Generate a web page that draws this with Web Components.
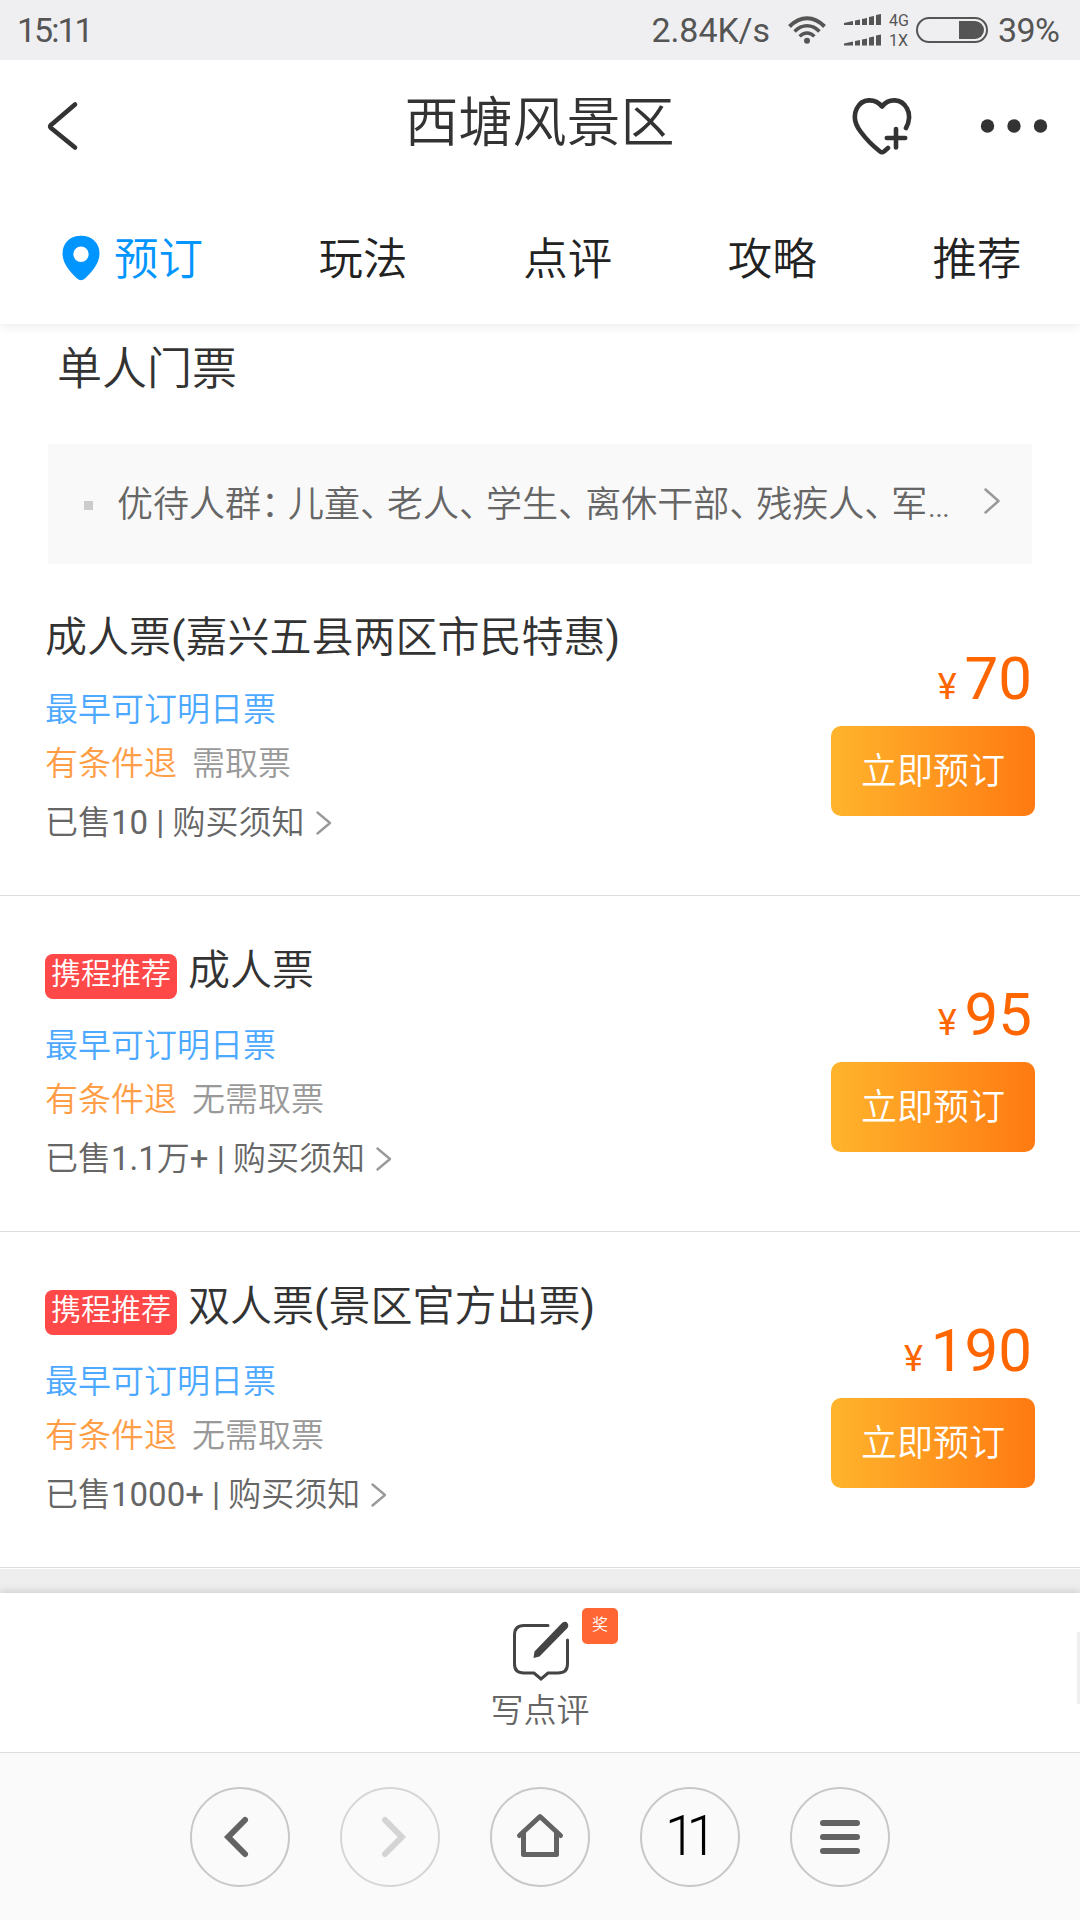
<!DOCTYPE html>
<html lang="zh-CN">
<head>
<meta charset="utf-8">
<title>西塘风景区</title>
<style>
body{margin:0;background:#fff;font-family:Roboto,"Noto Sans CJK SC",sans-serif;font-weight:350;color:#333}
</style>
</head>
<body>
<scenic-page>
  <status-bar time="15:11" speed="2.84K/s" battery="39%"></status-bar>
  <page-header>西塘风景区</page-header>
  <tab-bar><span slot="active">预订</span><span>玩法</span><span>点评</span><span>攻略</span><span>推荐</span></tab-bar>
  <ticket-group>单人门票</ticket-group>
  <ticket-item name="成人票(嘉兴五县两区市民特惠)" pickup="需取票" sold="已售10" price="70"></ticket-item>
  <ticket-item badge="携程推荐" name="成人票" pickup="无需取票" sold="已售1.1万+" price="95"></ticket-item>
  <ticket-item badge="携程推荐" name="双人票(景区官方出票)" pickup="无需取票" sold="已售1000+" price="190"></ticket-item>
  <review-bar>写点评</review-bar>
  <browser-bar tabs="11"></browser-bar>
</scenic-page>
<script>
// Latin runs in ticket texts are set one step heavier than the Chinese glyphs around them.
const latin = s => s.replace(/[\x21-\x7e]+/g, '<b>$&</b>');
const define = (name, html) => customElements.define(name, class extends HTMLElement {
  connectedCallback() {
    if (this.shadowRoot) return;
    this.attachShadow({mode: 'open'}).innerHTML =
      '<style>:host,*{box-sizing:border-box}svg{display:block;flex:none}</style>' +
      html.replace(/\{(\w+)\}/g, (m, k) => {
        const v = this.getAttribute(k) || '';
        return k === 'name' || k === 'sold' ? latin(v) : v;
      });
  }
});

define('scenic-page', `<style>:host{display:flex;flex-direction:column;width:1080px;height:1920px;overflow:hidden;background:#fff}</style><slot></slot>`);

define('status-bar', `<style>
:host{display:flex;align-items:center;height:60px;flex:none;background:#efeff1;color:#555;font-size:34px;line-height:60px;font-weight:400;padding:0 17px 0 17px}
.time{flex:1;letter-spacing:-2px}
.speed{letter-spacing:-.1px;margin-right:18px}
.pct{letter-spacing:-.6px;width:65px;margin-left:10px;white-space:nowrap}
.sim{display:flex;flex-direction:column;gap:4px;font-size:16px;line-height:16px;width:22px;margin:2px 5px 0 8px}
</style>
<span class="time">{time}</span><span class="speed">{speed}</span>
<svg width="38" height="28" viewBox="0 0 38 28" fill="none" stroke="#555" stroke-width="4"><path d="M1.5 10.5Q9.5 2.2 19 2.2T36.5 10.5"/><path d="M6.6 15.5Q12 9.8 19 9.8T31.4 15.5" stroke-width="3.6"/><path d="M11.600 20.400Q15 17 19 17T26.400 20.400" stroke-width="3.400"/><circle cx="19" cy="24.800" r="3" fill="#555" stroke="none"/></svg>
<svg width="37" height="32" viewBox="0 0 37 32" fill="#555" style="margin-left:18px"><path d="M0 9l9-2v4H0zM11 6.500l5-1V11h-5zM18 5l5-1V11h-5zM25 3l5-1v9h-5zM32 1l5-1v11h-5z"/><path transform="translate(0 20.500)" d="M0 9l9-2v4H0zM11 6.500l5-1V11h-5zM18 5l5-1V11h-5zM25 3l5-1v9h-5zM32 1l5-1v11h-5z"/></svg>
<span class="sim"><span>4G</span><span>1X</span></span>
<svg width="72" height="26" viewBox="0 0 72 26"><rect x="1" y="1" width="70" height="24" rx="12" fill="none" stroke="#555" stroke-width="2"/><path d="M43 4H59a9 9 0 0 1 0 18H43z" fill="#555"/></svg>
<span class="pct">{battery}</span>`);

define('page-header', `<style>
:host{display:flex;align-items:center;height:131px;flex:none;padding:0 32px 0 46px}
h1{flex:1;margin:0 -26px 4px -4px;font-size:54px;line-height:70px;font-weight:350;text-align:center;padding-left:127px}
.heart{margin-right:66px}
</style>
<svg width="34" height="52" viewBox="0 0 34 52" fill="none" stroke="#333" stroke-width="4.600" stroke-linecap="round" stroke-linejoin="round"><path d="M29 4.500L5 25Q3.500 26.500 5 28L29 47.500"/></svg>
<h1><slot></slot></h1>
<svg class="heart" width="64" height="60" viewBox="0 0 64 60" fill="none" stroke="#333" stroke-width="4.600" stroke-linecap="round" stroke-linejoin="round"><path d="M56 32C59.500 26 60.200 18 57 12.500C51.500 2 38.500 2 32 10.500C25 2 12 2 6.800 12.500C3 20 5 28 10.500 35.500C16 43 23 50 30 55.500Q32 57 34 55.500L38 52"/><path d="M36.800 42H55.200M46 33V51.500"/></svg>
<svg width="68" height="16" viewBox="0 0 68 16" fill="#333"><circle cx="7.500" cy="8" r="6.700"/><circle cx="34" cy="8" r="6.700"/><circle cx="60.500" cy="8" r="6.700"/></svg>`);

define('tab-bar', `<style>
:host{display:flex;align-items:center;height:133px;flex:none;padding:0 0 0 62px;font-size:44.500px;line-height:60px;color:#222;position:relative;z-index:1;background:#fff;box-shadow:0 3px 9px rgba(0,0,0,.07);clip-path:inset(0 0 -20px)}
.list{display:flex;gap:115.600px;margin:4px 0 0 14px}
.on{color:#0095ff}
svg{margin-top:1px}
</style>
<svg width="38" height="46" viewBox="0 0 38 46"><path fill="#0095ff" fill-rule="evenodd" d="M19 .7C30 .7 37.500 8 37.500 18.500C37.500 29 29 38 23 43.500Q19 47 15 43.500C9 38 .5 29 .5 18.500C.5 8 8 .7 19 .7ZM19 11.500a7.700 7.700 0 1 0 0 15.400a7.700 7.700 0 1 0 0-15.400Z"/></svg>
<div class="list"><span class="on"><slot name="active"></slot></span><slot></slot></div>`);

define('ticket-group', `<style>
:host{display:flex;flex-direction:column;height:236px;flex:none;padding:16px 48px 0}
h2{margin:0 0 0 9px;font-size:45px;line-height:60px;height:60px;flex:none;font-weight:350}
.note{display:flex;flex:none;align-items:center;height:120px;margin-top:44px;background:#f9f9f9;color:#666;font-size:36px;line-height:50px;padding:0 32px 0 36px;white-space:nowrap}
.note i{width:9px;height:9px;background:#ccc;margin:3px 24px 0 0}
.note p{flex:1;margin:1px 0 0}
b{font-weight:350;letter-spacing:-9px}
svg{margin-top:-6px}
</style>
<h2><slot></slot></h2>
<div class="note"><i></i><p>优待人群<b>：</b>儿童<b>、</b>老人<b>、</b>学生<b>、</b>离休干部<b>、</b>残疾人<b>、</b>军…</p>
<svg width="16" height="26" viewBox="0 0 16 26" fill="none" stroke="#999" stroke-width="2.500" stroke-linecap="round" stroke-linejoin="round"><path d="M1.500 1.500L14.500 13L1.500 24.500"/></svg></div>`);

define('ticket-item', `<style>
:host{display:flex;justify-content:space-between;height:336px;flex:none;border-bottom:1px solid #ddd;padding:51px 45px 0 45px}
b{font-weight:400}
.info{font-size:33px;line-height:44px}
.head{display:flex;height:56px;margin-bottom:21px}
.name{font-size:42px;line-height:56px;white-space:nowrap;margin-top:-1px}
.tag{display:none;margin:7px 11px 0 0;width:132px;height:45px;border-radius:8px;background:#ff4848;color:#fff;font-size:30px;line-height:40px;text-align:center}
:host([badge]) .tag{display:block}
:host([badge]) .name{margin-top:-4px}
.early{color:#4ca9ff}
.rule{display:flex;gap:15px;color:#999;margin:10px 0 15px}
.rule span:first-child{color:#ff9e46}
.sold{display:flex;align-items:center;color:#666;white-space:nowrap}
.buy{display:flex;flex-direction:column;align-items:flex-end;padding-top:38px}
.price{color:#f60;font-size:60px;line-height:60px;height:60px;font-weight:400;margin:0 3px 17px 0;display:flex;align-items:baseline;gap:8px}
.price small{font-size:36px}
button{width:204px;height:90px;border:0;border-radius:10px;padding:1px 0 0;background:linear-gradient(90deg,#ffb42c,#ff7a12);color:#fff;font:inherit;font-size:36px;line-height:50px}
</style>
<div class="info"><div class="head"><span class="tag">{badge}</span><span class="name">{name}</span></div>
<div class="early">最早可订明日票</div>
<div class="rule"><span>有条件退</span><span>{pickup}</span></div>
<div class="sold"><span>{sold}<b> | </b>购买须知</span><svg style="margin:0 0 0 11px" width="16" height="24" viewBox="0 0 16 24" fill="none" stroke="#999" stroke-width="2.300" stroke-linecap="round" stroke-linejoin="round"><path d="M1.500 1.500L14 12L1.500 22.500"/></svg></div></div>
<div class="buy"><div class="price"><small>¥</small><span>{price}</span></div><button>立即预订</button></div>`);

define('review-bar', `<style>
:host{display:block;flex:none;height:185px;padding-top:24px;background:#eee;border-top:1px solid #fff;overflow:hidden}
.panel{display:flex;flex-direction:column;align-items:center;height:160px;background:#fff;border-bottom:1px solid #ddd;box-shadow:0 -1px 9px rgba(0,0,0,.16);position:relative;padding-top:28px;color:#666;font-size:33px;line-height:44px}
.reward{position:absolute;left:582px;top:15px;width:36px;height:36px;border-radius:5px;background:#f63;color:#fff;font-size:16px;line-height:34px;text-align:center}
.handle{position:absolute;right:0;top:39px;width:3px;height:72px;background:#eee}
span{margin-top:8px}
</style>
<div class="panel">
<svg width="58" height="60" viewBox="0 0 58 60" style="margin-left:2px"><path fill="none" stroke="#444" stroke-width="3" stroke-linecap="round" d="M36 4.500H12Q2.500 4.500 2.500 14V43Q2.500 52 12 52H22L29 58L36 52H46Q55.500 52 55.500 43V19"/><path fill="#444" d="M49.500 2.500Q51.500 0 54.500 1Q57.500 4 55.500 7L27.500 35.500L21.500 37L22.500 30.500Z"/></svg>
<span><slot></slot></span><div class="reward">奖</div><div class="handle"></div></div>`);

define('browser-bar', `<style>
:host{display:flex;justify-content:center;gap:50px;flex:1;background:#fafafa;padding-top:34px}
.c{width:100px;height:100px;flex:none;border:2px solid #c8c8c8;border-radius:50%;display:flex;align-items:center;justify-content:center;color:#000;font-size:55px;line-height:60px;letter-spacing:-9px;font-weight:350}
.c.off{border-color:#d6d6d6}
.c span{margin:-3px 0 0 -7px}
</style>
<div class="c"><svg width="100" height="100" viewBox="0 0 100 100" fill="none" stroke="#636363" stroke-width="6" stroke-linecap="round"><path d="M55 33L38.200 50L55 67"/></svg></div>
<div class="c off"><svg width="100" height="100" viewBox="0 0 100 100" fill="none" stroke="#d4d4d4" stroke-width="6" stroke-linecap="round"><path d="M45 33L61.800 50L45 67"/></svg></div>
<div class="c"><svg width="100" height="100" viewBox="0 0 100 100" fill="none" stroke="#636363" stroke-width="5" stroke-linecap="round" stroke-linejoin="round"><path d="M29.500 48.500L50 29.500L70.500 48.500"/><path d="M33.500 46V67.500H66.500V46"/></svg></div>
<div class="c"><span>{tabs}</span></div>
<div class="c"><svg width="100" height="100" viewBox="0 0 100 100" stroke="#636363" stroke-width="6" stroke-linecap="round"><path d="M33 36H67M33 50H67M33 64H67"/></svg></div>`);
</script>
</body>
</html>
